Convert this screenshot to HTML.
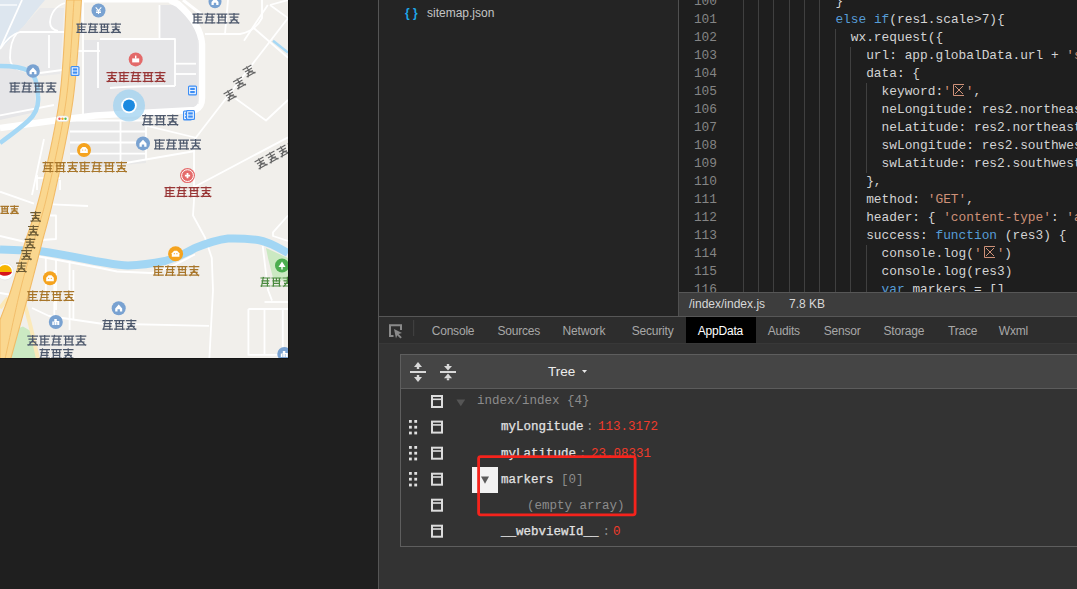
<!DOCTYPE html>
<html><head><meta charset="utf-8">
<style>
*{margin:0;padding:0;box-sizing:border-box}
html,body{width:1077px;height:589px;overflow:hidden;background:#1f1f1f;font-family:"Liberation Sans",sans-serif}
.a{position:absolute}
#map{left:0;top:0;width:289px;height:359px;background:#f1efeb;border-right:1px solid #141414;border-bottom:1px solid #141414;overflow:hidden}
#vline{left:378px;top:0;width:1px;height:589px;background:#555;z-index:2}
#tree{left:379px;top:0;width:299px;height:316px;background:#242424}
#tline{left:678px;top:0;width:1px;height:316px;background:#505050;z-index:2}
#editor{left:679px;top:0;width:398px;height:292px;background:#1e1e1e;overflow:hidden;font-family:"Liberation Mono",monospace;font-size:12.83px;color:#d4d4d4}
.ln{position:absolute;left:0;width:38px;text-align:right;color:#858585;height:18px;line-height:18px}
.cl{position:absolute;left:49px;white-space:pre;height:18px;line-height:18px}
.g{position:absolute;width:1px;background:#404040}
.k{color:#569cd6}.s{color:#ce9178}
.box{display:inline-block;width:13px;height:12px;vertical-align:-1px;position:relative;margin:0 1px 0 1px}
#status{left:679px;top:292px;width:398px;height:24px;background:#3d3d3d;border-top:1px solid #575757;color:#d8d8d8;font-size:12px}
#hline{left:379px;top:316px;width:698px;height:1px;background:#575757}
#tabs{left:379px;top:317px;width:698px;height:27px;background:#2d2d2d;border-bottom:1px solid #383838;font-size:12px;letter-spacing:-0.2px;color:#a8a8a8}
.tab{position:absolute;top:0;height:26px;line-height:28px;white-space:nowrap}
#panel{left:379px;top:344px;width:698px;height:245px;background:#333333}
#adbox{left:400px;top:354px;width:690px;height:193px;border:1px solid #5e5e5e;background:#333}
#adhead{left:401px;top:355px;width:690px;height:34px;background:#454545;border-bottom:1px solid #5c5c5c}
.mono{font-family:"Liberation Mono",monospace;font-size:12.5px;white-space:pre}
.key{color:#e2e2e2;font-weight:normal;-webkit-text-stroke:0.25px #e2e2e2}
.col{color:#8a8a8a;margin-left:2.5px}
.num{color:#ef3b2b;margin-left:4.5px}
</style></head><body>
<div id="map" class="a">
<svg class="a" style="left:0;top:0" width="288" height="358" viewBox="0 0 288 358">
<rect width="289" height="359" fill="#f1efeb"/>
<path d="M0,0 H45 C38,8 30,18 24,26 C16,36 8,42 0,50 Z" fill="#dde6ef"/>
<path d="M22,0 L0,49" stroke="#fff" stroke-width="1.8" fill="none"/>
<path d="M0,5 H17" stroke="#fff" stroke-width="1.2" fill="none"/>
<path d="M84,40 H159 V5 H176 C186,12 194,22 198,34 L201,44 V100 L200,112 C170,114 120,116 84,118 Z" fill="#e5e5e7"/>
<path d="M70,121 H146 L146,163 L70,170 Z" fill="#e8e8e8"/>
<path d="M0,50 C8,42 16,32 24,26 L40,8 H64 L60,74 L40,76 C30,70 18,66 0,64 Z" fill="#e9e9ea"/>
<path d="M0,66 C18,68 30,74 34,80 L36,112 L0,120 Z" fill="#e6e6e8"/>
<path d="M0,49 C6,40 12,34 20,32 H64" stroke="#fff" stroke-width="1.8" fill="none" stroke-linejoin="round"/>
<path d="M17,33 C11,40 10,48 10,58 C10,64 14,68 20,70" stroke="#fff" stroke-width="1.8" fill="none" stroke-linejoin="round"/>
<path d="M49,35 V68" stroke="#fff" stroke-width="1.8" fill="none" stroke-linejoin="round"/>
<path d="M65,3 C56,6 51,12 50,22 C50,28 53,30 58,31" stroke="#fff" stroke-width="1.8" fill="none" stroke-linejoin="round"/>
<path d="M40,73 L62,70" stroke="#fff" stroke-width="1.8" fill="none" stroke-linejoin="round"/>
<path d="M83,0 V120" stroke="#fff" stroke-width="1.8" fill="none" stroke-linejoin="round"/>
<path d="M75,51 H100" stroke="#fff" stroke-width="1.8" fill="none" stroke-linejoin="round"/>
<path d="M98,42 V88" stroke="#fff" stroke-width="1.8" fill="none" stroke-linejoin="round"/>
<path d="M100,39 H175 V86" stroke="#fff" stroke-width="1.8" fill="none" stroke-linejoin="round"/>
<path d="M159.5,5 V39" stroke="#fff" stroke-width="1.8" fill="none" stroke-linejoin="round"/>
<path d="M175,63.7 H196" stroke="#fff" stroke-width="1.8" fill="none" stroke-linejoin="round"/>
<path d="M175,74 H196" stroke="#fff" stroke-width="1.8" fill="none" stroke-linejoin="round"/>
<path d="M110,88 C130,86 150,86 175,86" stroke="#fff" stroke-width="1.8" fill="none" stroke-linejoin="round"/>
<path d="M205,34 H240 C250,32 258,26 262,18 V0" stroke="#fff" stroke-width="1.8" fill="none" stroke-linejoin="round"/>
<path d="M228,0 L225,34" stroke="#fff" stroke-width="1.8" fill="none" stroke-linejoin="round"/>
<path d="M270,5 L288,18" stroke="#fff" stroke-width="1.8" fill="none" stroke-linejoin="round"/>
<path d="M252.5,27 L288,57.7" stroke="#fff" stroke-width="1.8" fill="none" stroke-linejoin="round"/>
<path d="M267.8,5 L244,40.7" stroke="#fff" stroke-width="1.8" fill="none" stroke-linejoin="round"/>
<path d="M288,0 L270,5" stroke="#fff" stroke-width="1.8" fill="none" stroke-linejoin="round"/>
<path d="M288,18 L194.8,139" stroke="#fff" stroke-width="1.8" fill="none" stroke-linejoin="round"/>
<path d="M235.5,98.4 L266,120.5 L288,100" stroke="#fff" stroke-width="1.8" fill="none" stroke-linejoin="round"/>
<path d="M194.8,186.7 L288,137.4" stroke="#fff" stroke-width="1.8" fill="none" stroke-linejoin="round"/>
<path d="M0,115.4 L54,105" stroke="#fff" stroke-width="1.8" fill="none" stroke-linejoin="round"/>
<path d="M44,139 L32,195" stroke="#fff" stroke-width="1.8" fill="none" stroke-linejoin="round"/>
<path d="M70,120.5 H146" stroke="#fff" stroke-width="1.8" fill="none" stroke-linejoin="round"/>
<path d="M70,131.5 H146" stroke="#fff" stroke-width="1.8" fill="none" stroke-linejoin="round"/>
<path d="M70,142.5 H146" stroke="#fff" stroke-width="1.8" fill="none" stroke-linejoin="round"/>
<path d="M70,153.6 H146" stroke="#fff" stroke-width="1.8" fill="none" stroke-linejoin="round"/>
<path d="M120.5,120 V165" stroke="#fff" stroke-width="1.8" fill="none" stroke-linejoin="round"/>
<path d="M146,118 V160" stroke="#fff" stroke-width="1.8" fill="none" stroke-linejoin="round"/>
<path d="M125.6,163 L195,151" stroke="#fff" stroke-width="1.8" fill="none" stroke-linejoin="round"/>
<path d="M146,125.6 L195,137.5" stroke="#fff" stroke-width="1.8" fill="none" stroke-linejoin="round"/>
<path d="M194,139 V200 L193,215.5 L205,237.5 L211.8,258 L213,290 L209.4,358" stroke="#fff" stroke-width="1.8" fill="none" stroke-linejoin="round"/>
<path d="M0,191.7 L34,203.6" stroke="#fff" stroke-width="1.8" fill="none" stroke-linejoin="round"/>
<path d="M52.6,204.4 L88,206" stroke="#fff" stroke-width="1.8" fill="none" stroke-linejoin="round"/>
<path d="M40.7,215.5 H56 V239 L40.7,240" stroke="#fff" stroke-width="1.8" fill="none" stroke-linejoin="round"/>
<path d="M0,236 L34,244" stroke="#fff" stroke-width="1.8" fill="none" stroke-linejoin="round"/>
<path d="M45.8,258 V300" stroke="#fff" stroke-width="1.8" fill="none" stroke-linejoin="round"/>
<path d="M56,259 V310" stroke="#fff" stroke-width="1.8" fill="none" stroke-linejoin="round"/>
<path d="M69.6,261 V330" stroke="#fff" stroke-width="1.8" fill="none" stroke-linejoin="round"/>
<path d="M54.3,270 V316" stroke="#fff" stroke-width="1.8" fill="none" stroke-linejoin="round"/>
<path d="M73.4,270 V320" stroke="#fff" stroke-width="1.8" fill="none" stroke-linejoin="round"/>
<path d="M32,308 L49,316 L100,323.5 L209,325.8" stroke="#fff" stroke-width="1.8" fill="none" stroke-linejoin="round"/>
<path d="M0,293 L9,294.5" stroke="#fff" stroke-width="1.8" fill="none" stroke-linejoin="round"/>
<path d="M262.7,246 L268,290 L272,300.6" stroke="#fff" stroke-width="1.8" fill="none" stroke-linejoin="round"/>
<path d="M264.5,302 H288" stroke="#fff" stroke-width="1.8" fill="none" stroke-linejoin="round"/>
<path d="M248.4,309 H288 M248.4,309 V354.9 H288 M264.5,309 V354.9 M282.8,309 V354.9" stroke="#fff" stroke-width="1.8" fill="none" stroke-linejoin="round"/>
<path d="M288,215.5 L273,232.4 V236 L288,241" stroke="#fff" stroke-width="1.8" fill="none" stroke-linejoin="round"/>
<path d="M37,175 V190" stroke="#fff" stroke-width="1.8" fill="none" stroke-linejoin="round"/>
<path d="M60,180 V190" stroke="#fff" stroke-width="1.8" fill="none" stroke-linejoin="round"/>
<path d="M35,178 H60" stroke="#fff" stroke-width="1.8" fill="none" stroke-linejoin="round"/>
<path d="M0,128 L58,120 L95,115.5 L140,113 L195,110 C200,108 202,104 202,98 V44 C201,30 194,18 178,4 L170,0" stroke="#fff" stroke-width="6.5" fill="none" stroke-linejoin="round"/>
<path d="M183,0 L201,14" stroke="#fff" stroke-width="3" fill="none"/>
<path d="M198,40 V104" stroke="#e9e9ea" stroke-width="1" fill="none"/>
<path d="M84,1 H176" stroke="#fff" stroke-width="3" fill="none"/>
<path d="M0,66 C12,66 22,67 29,71 C35,75 37,82 38,96 C39,106 36,114 28,121 C18,130 8,137 0,143" stroke="#a6d8f5" stroke-width="4.5" fill="none"/>
<path d="M273,40.7 L288,52.6" stroke="#a6d8f5" stroke-width="2.5" fill="none"/>
<path d="M0,249.5 C15,250 30,250.5 39,251 C60,254 80,258 95,261 C108,263 118,265.5 128,265.5 C145,265 155,263 165,261 C175,258 185,254 195,248 C205,244 215,240 228,238.5 C240,238 250,239 258,240 C266,241 276,246 288,253" stroke="#a2d6f4" stroke-width="8" fill="none"/>
<path d="M39,256.5 L100,268 L117,271.5 L151,273 C165,271 180,262 195,254.5" stroke="#fff" stroke-width="1.8" fill="none"/>
<path d="M266,248 L288,258 V282 L273,278 L268,258 Z" fill="#cbe9c2"/>
<path d="M10.7,331 L23,326.6 L30.6,331 L38,359 H11.5 Z" fill="#cbe9c2"/>
<path d="M23,299 C28,315 33,335 38,359" stroke="#fbe9b9" stroke-width="4" fill="none"/>
<path d="M0,308 L8,298" stroke="#fbe9b9" stroke-width="4" fill="none"/>
<path d="M66.5,0 C65.3,16.7 63.8,67.5 59.4,100 C55.0,132.5 45.6,171.5 40,195 C34.4,218.5 30.3,225.2 25.5,241 C20.7,256.8 15.2,276.8 11,290 C6.8,303.2 1.8,315.0 0,320 L0,359 L10.7,359 C13.9,347.5 24.4,309.7 29.7,290 C35.0,270.3 38.3,256.8 42.4,241 C46.5,225.2 49.2,218.5 54.3,195 C59.4,171.5 68.5,132.5 73,100 C77.5,67.5 80.1,16.7 81.5,0 Z" fill="#fad78f" stroke="#f2bb66" stroke-width="1.1" stroke-linejoin="round"/>
<path d="M74.0,0.0 C72.7,16.7 70.7,67.5 66.2,100.0 C61.7,132.5 52.5,171.5 47.15,195.0 C41.8,218.5 38.4,225.2 33.95,241.0 C29.5,256.8 25.2,270.3 20.35,290.0 C15.5,309.7 7.6,347.5 5,359" stroke="#f2bb66" stroke-width="0.9" fill="none"/>
<rect x="56.5" y="116" width="12" height="5.5" rx="2.7" fill="#fff" stroke="#ddd" stroke-width="0.6"/>
<circle cx="59.5" cy="118.8" r="1.2" fill="#e55"/><circle cx="62.5" cy="118.8" r="1.2" fill="#f5a623"/><circle cx="65.5" cy="118.8" r="1.2" fill="#5b5"/>
<circle cx="98.5" cy="10.5" r="7" fill="#79a2d1"/>
<path d="M95.7,7.3 L98.5,10.5 L101.3,7.3 M98.5,10.5 V14.0 M96.0,11.0 H101.0 M96.0,12.5 H101.0" stroke="#fff" stroke-width="1.1" fill="none"/>
<circle cx="33" cy="71" r="6.8" fill="#79a2d1"/>
<path d="M29.5,71.2 L33,67.4 L36.5,71.2 V74.3 H34.2 V72 H31.8 V74.3 H29.5 Z" fill="#fff"/>
<circle cx="215" cy="1.7" r="6.5" fill="#79a2d1"/>
<path d="M211.5,1.9 L215,-1.9000000000000001 L218.5,1.9 V5.0 H216.2 V2.7 H213.8 V5.0 H211.5 Z" fill="#fff"/>
<circle cx="135.7" cy="59.4" r="7" fill="#e36a6a"/>
<rect x="132.2" y="58.4" width="7" height="4" fill="#fff"/><rect x="135.0" y="55.6" width="1.4" height="3" fill="#fff"/>
<circle cx="143" cy="143.4" r="7" fill="#79a2d1"/>
<path d="M139.5,143.6 L143,139.8 L146.5,143.6 V146.70000000000002 H144.2 V144.4 H141.8 V146.70000000000002 H139.5 Z" fill="#fff"/>
<circle cx="187.5" cy="175.6" r="7.5" fill="#e56b6b"/>
<circle cx="187.5" cy="175.6" r="5.9" fill="none" stroke="#fff" stroke-width="1"/>
<path d="M184.9,175.6 H190.1 M187.5,173.0 V178.2" stroke="#fff" stroke-width="1.8"/>
<circle cx="84" cy="150" r="7" fill="#f5a31e"/>
<path d="M80.2,153 V149.5 L82.5,147 H85.5 L87.8,149.5 V153 Z" fill="#fff"/>
<circle cx="82.7" cy="150" r="0.6" fill="#f5a31e"/><circle cx="85.3" cy="150" r="0.6" fill="#f5a31e"/>
<circle cx="50" cy="278.3" r="7" fill="#f5a31e"/>
<path d="M46.2,281.3 V277.8 L48.5,275.3 H51.5 L53.8,277.8 V281.3 Z" fill="#fff"/>
<circle cx="48.7" cy="278.3" r="0.6" fill="#f5a31e"/><circle cx="51.3" cy="278.3" r="0.6" fill="#f5a31e"/>
<circle cx="175.6" cy="253.7" r="7.5" fill="#f5a31e"/>
<path d="M171.79999999999998,256.7 V253.2 L174.1,250.7 H177.1 L179.4,253.2 V256.7 Z" fill="#fff"/>
<circle cx="174.29999999999998" cy="253.7" r="0.6" fill="#f5a31e"/><circle cx="176.9" cy="253.7" r="0.6" fill="#f5a31e"/>
<circle cx="282" cy="265.5" r="7" fill="#4cae50"/>
<path d="M282,261.5 L285.5,267.0 H278.5 Z M281.3,266.5 h1.4 v3 h-1.4 Z" fill="#fff"/>
<circle cx="118.7" cy="308.2" r="7" fill="#79a2d1"/>
<path d="M115.2,308.4 L118.7,304.59999999999997 L122.2,308.4 V311.5 H119.9 V309.2 H117.5 V311.5 H115.2 Z" fill="#fff"/>
<circle cx="55.8" cy="322" r="7" fill="#79a2d1"/>
<path d="M52.3,325 V321.5 H54.3 V319 H56.8 V321 H59.3 V325 Z" fill="#fff"/>
<path d="M54.3,325 V322 M56.8,325 V322" stroke="#79a2d1" stroke-width="0.6"/>
<circle cx="284.3" cy="354" r="7" fill="#79a2d1"/>
<path d="M280.8,357 V353.5 H282.8 V351 H285.3 V353 H287.8 V357 Z" fill="#fff"/>
<path d="M282.8,357 V354 M285.3,357 V354" stroke="#79a2d1" stroke-width="0.6"/>
<rect x="70.5" y="66" width="9" height="10" rx="1.5" fill="#3d8ef5"/>
<rect x="72.2" y="67.8" width="5.6" height="6.4" fill="none" stroke="#fff" stroke-width="1"/>
<path d="M72.2,71 H77.8" stroke="#fff" stroke-width="0.9"/>
<rect x="188.0" y="85.5" width="9" height="10" rx="1.5" fill="#3d8ef5"/>
<rect x="189.7" y="87.3" width="5.6" height="6.4" fill="none" stroke="#fff" stroke-width="1"/>
<path d="M189.7,90.5 H195.3" stroke="#fff" stroke-width="0.9"/>
<rect x="183.0" y="110.4" width="9" height="10" rx="1.5" fill="#3d8ef5"/>
<rect x="184.7" y="112.2" width="5.6" height="6.4" fill="none" stroke="#fff" stroke-width="1"/>
<path d="M184.7,115.4 H190.3" stroke="#fff" stroke-width="0.9"/>
<rect x="186.0" y="110" width="9" height="10" rx="1.5" fill="#3d8ef5"/>
<rect x="187.7" y="111.8" width="5.6" height="6.4" fill="none" stroke="#fff" stroke-width="1"/>
<path d="M187.7,115 H193.3" stroke="#fff" stroke-width="0.9"/>
<circle cx="5" cy="271.5" r="8.5" fill="#fff" stroke="#e3e3e3" stroke-width="0.8"/>
<path d="M-2,272 A7,7 0 0 1 12,272 Z" fill="#f7b500"/><path d="M-2,272 H12 C10,277 0,277 -2,272 Z" fill="#d7141a"/>
<circle cx="129" cy="105.5" r="16" fill="#9fd2f0" fill-opacity="0.75"/>
<circle cx="129" cy="105.5" r="7.8" fill="#fff"/>
<circle cx="129" cy="105.5" r="6" fill="#1b8ae0"/>
<path d="M76.4,24.1 H86.8 M77.5,27.0 H85.7 M78.0,29.6 H85.2 M76.4,32.3 H86.8 M81.6,22.8 V33.1 M78.0,24.4 V32.3 M87.9,24.1 H98.2 M88.9,27.0 H97.1 M89.4,29.6 H96.6 M87.9,32.3 H98.2 M91.0,22.8 L88.9,33.1 M95.1,24.4 V33.1 M99.3,24.1 H109.6 M100.3,27.0 H108.6 M100.8,29.6 H108.1 M99.3,32.3 H109.6 M101.4,24.4 V33.1 M107.5,24.4 V33.1 M104.4,24.4 V28.0 M110.7,24.1 H121.0 M111.8,27.0 H120.0 M112.3,29.6 H119.5 M110.7,32.3 H121.0 M115.9,22.8 V28.0 L111.8,33.1 M115.9,28.0 L120.5,33.1" stroke="#4d586c" stroke-width="1.2" fill="none"/>
<path d="M192.5,14.2 H203.3 M193.6,17.2 H202.2 M194.1,20.0 H201.7 M192.5,22.8 H203.3 M197.9,12.9 V23.7 M194.1,14.5 V22.8 M204.5,14.2 H215.4 M205.6,17.2 H214.3 M206.1,20.0 H213.7 M204.5,22.8 H215.4 M207.8,12.9 L205.6,23.7 M212.1,14.5 V23.7 M216.5,14.2 H227.4 M217.6,17.2 H226.3 M218.2,20.0 H225.8 M216.5,22.8 H227.4 M218.7,14.5 V23.7 M225.2,14.5 V23.7 M222.0,14.5 V18.3 M228.6,14.2 H239.4 M229.7,17.2 H238.4 M230.2,20.0 H237.8 M228.6,22.8 H239.4 M234.0,12.9 V18.3 L229.7,23.7 M234.0,18.3 L238.9,23.7" stroke="#4d586c" stroke-width="1.2" fill="none"/>
<path d="M106.5,72.7 H117.3 M107.6,75.7 H116.2 M108.1,78.5 H115.7 M106.5,81.3 H117.3 M111.9,71.4 V76.8 L107.6,82.2 M111.9,76.8 L116.8,82.2 M118.5,72.7 H129.4 M119.6,75.7 H128.3 M120.1,78.5 H127.7 M118.5,81.3 H129.4 M123.9,71.4 V82.2 M120.1,73.0 V81.3 M130.5,72.7 H141.4 M131.6,75.7 H140.3 M132.2,78.5 H139.8 M130.5,81.3 H141.4 M133.8,71.4 L131.6,82.2 M138.1,73.0 V82.2 M142.6,72.7 H153.4 M143.7,75.7 H152.4 M144.2,78.5 H151.8 M142.6,81.3 H153.4 M144.8,73.0 V82.2 M151.3,73.0 V82.2 M148.0,73.0 V76.8 M154.6,72.7 H165.5 M155.7,75.7 H164.4 M156.2,78.5 H163.8 M154.6,81.3 H165.5 M160.0,71.4 V76.8 L155.7,82.2 M160.0,76.8 L164.9,82.2" stroke="#983535" stroke-width="1.2" fill="none"/>
<path d="M9.5,83.2 H20.3 M10.6,86.2 H19.2 M11.1,89.0 H18.7 M9.5,91.8 H20.3 M14.9,81.9 V92.7 M11.1,83.5 V91.8 M21.5,83.2 H32.4 M22.6,86.2 H31.3 M23.1,89.0 H30.7 M21.5,91.8 H32.4 M24.8,81.9 L22.6,92.7 M29.1,83.5 V92.7 M33.5,83.2 H44.4 M34.6,86.2 H43.3 M35.2,89.0 H42.8 M33.5,91.8 H44.4 M35.7,83.5 V92.7 M42.2,83.5 V92.7 M39.0,83.5 V87.3 M45.6,83.2 H56.4 M46.7,86.2 H55.4 M47.2,89.0 H54.8 M45.6,91.8 H56.4 M51.0,81.9 V87.3 L46.7,92.7 M51.0,87.3 L55.9,92.7" stroke="#4d586c" stroke-width="1.2" fill="none"/>
<path d="M142.2,115.7 H153.4 M143.3,118.9 H152.3 M143.9,121.8 H151.7 M142.2,124.7 H153.4 M145.6,114.4 L143.3,125.6 M150.0,116.0 V125.6 M154.6,115.7 H165.9 M155.8,118.9 H164.7 M156.3,121.8 H164.2 M154.6,124.7 H165.9 M156.9,116.0 V125.6 M163.6,116.0 V125.6 M160.2,116.0 V120.0 M167.1,115.7 H178.3 M168.2,118.9 H177.2 M168.8,121.8 H176.6 M167.1,124.7 H178.3 M172.7,114.4 V120.0 L168.2,125.6 M172.7,120.0 L177.7,125.6" stroke="#4d586c" stroke-width="1.2" fill="none"/>
<path d="M154.1,140.2 H164.9 M155.2,143.2 H163.8 M155.7,146.0 H163.3 M154.1,148.8 H164.9 M159.5,138.9 V149.7 M155.7,140.5 V148.8 M166.1,140.2 H177.0 M167.2,143.2 H175.9 M167.7,146.0 H175.3 M166.1,148.8 H177.0 M169.4,138.9 L167.2,149.7 M173.7,140.5 V149.7 M178.1,140.2 H189.0 M179.2,143.2 H187.9 M179.8,146.0 H187.4 M178.1,148.8 H189.0 M180.3,140.5 V149.7 M186.8,140.5 V149.7 M183.6,140.5 V144.3 M190.2,140.2 H201.0 M191.3,143.2 H200.0 M191.8,146.0 H199.4 M190.2,148.8 H201.0 M195.6,138.9 V144.3 L191.3,149.7 M195.6,144.3 L200.5,149.7" stroke="#4d586c" stroke-width="1.2" fill="none"/>
<path d="M42.5,162.7 H53.5 M43.6,165.8 H52.4 M44.1,168.6 H51.9 M42.5,171.5 H53.5 M45.8,161.4 L43.6,172.4 M50.2,163.0 V172.4 M54.7,162.7 H65.8 M55.8,165.8 H64.7 M56.4,168.6 H64.1 M54.7,171.5 H65.8 M56.9,163.0 V172.4 M63.6,163.0 V172.4 M60.2,163.0 V166.9 M67.0,162.7 H78.0 M68.1,165.8 H76.9 M68.6,168.6 H76.3 M67.0,171.5 H78.0 M72.5,161.4 V166.9 L68.1,172.4 M72.5,166.9 L77.4,172.4 M79.2,162.7 H90.2 M80.3,165.8 H89.1 M80.9,168.6 H88.6 M79.2,171.5 H90.2 M84.7,161.4 V172.4 M80.9,163.0 V171.5 M91.4,162.7 H102.5 M92.5,165.8 H101.4 M93.1,168.6 H100.8 M91.4,171.5 H102.5 M94.8,161.4 L92.5,172.4 M99.2,163.0 V172.4 M103.7,162.7 H114.7 M104.8,165.8 H113.6 M105.3,168.6 H113.1 M103.7,171.5 H114.7 M105.9,163.0 V172.4 M112.5,163.0 V172.4 M109.2,163.0 V166.9 M115.9,162.7 H127.0 M117.0,165.8 H125.9 M117.6,168.6 H125.3 M115.9,171.5 H127.0 M121.4,161.4 V166.9 L117.0,172.4 M121.4,166.9 L126.4,172.4" stroke="#a8762a" stroke-width="1.2" fill="none"/>
<path d="M164.5,187.7 H175.3 M165.6,190.7 H174.2 M166.1,193.5 H173.7 M164.5,196.3 H175.3 M169.9,186.4 V197.2 M166.1,188.0 V196.3 M176.5,187.7 H187.4 M177.6,190.7 H186.3 M178.1,193.5 H185.7 M176.5,196.3 H187.4 M179.8,186.4 L177.6,197.2 M184.1,188.0 V197.2 M188.5,187.7 H199.4 M189.6,190.7 H198.3 M190.2,193.5 H197.8 M188.5,196.3 H199.4 M190.7,188.0 V197.2 M197.2,188.0 V197.2 M194.0,188.0 V191.8 M200.6,187.7 H211.4 M201.7,190.7 H210.4 M202.2,193.5 H209.8 M200.6,196.3 H211.4 M206.0,186.4 V191.8 L201.7,197.2 M206.0,191.8 L210.9,197.2" stroke="#983535" stroke-width="1.2" fill="none"/>
<path d="M0.4,206.3 H9.1 M1.3,208.8 H8.2 M1.7,211.1 H7.8 M0.4,213.3 H9.1 M2.1,206.6 V214.0 M7.4,206.6 V214.0 M4.8,206.6 V209.7 M10.1,206.3 H18.8 M10.9,208.8 H17.9 M11.4,211.1 H17.5 M10.1,213.3 H18.8 M14.4,205.3 V209.7 L10.9,214.0 M14.4,209.7 L18.4,214.0" stroke="#a8762a" stroke-width="1.2" fill="none"/>
<path d="M153.2,266.6 H163.8 M154.2,269.6 H162.8 M154.8,272.4 H162.2 M153.2,275.2 H163.8 M158.5,265.3 V276.0 M154.8,266.9 V275.2 M165.0,266.6 H175.7 M166.1,269.6 H174.6 M166.6,272.4 H174.1 M165.0,275.2 H175.7 M168.2,265.3 L166.1,276.0 M172.5,266.9 V276.0 M176.8,266.6 H187.5 M177.9,269.6 H186.4 M178.4,272.4 H185.9 M176.8,275.2 H187.5 M179.0,266.9 V276.0 M185.4,266.9 V276.0 M182.2,266.9 V270.7 M188.7,266.6 H199.3 M189.7,269.6 H198.3 M190.3,272.4 H197.7 M188.7,275.2 H199.3 M194.0,265.3 V270.7 L189.7,276.0 M194.0,270.7 L198.8,276.0" stroke="#a8762a" stroke-width="1.2" fill="none"/>
<path d="M27.3,291.7 H38.1 M28.4,294.7 H37.0 M28.9,297.5 H36.5 M27.3,300.3 H38.1 M32.7,290.4 V301.2 M28.9,292.0 V300.3 M39.3,291.7 H50.2 M40.4,294.7 H49.1 M40.9,297.5 H48.5 M39.3,300.3 H50.2 M42.6,290.4 L40.4,301.2 M46.9,292.0 V301.2 M51.3,291.7 H62.2 M52.4,294.7 H61.1 M53.0,297.5 H60.6 M51.3,300.3 H62.2 M53.5,292.0 V301.2 M60.0,292.0 V301.2 M56.8,292.0 V295.8 M63.4,291.7 H74.2 M64.5,294.7 H73.2 M65.0,297.5 H72.6 M63.4,300.3 H74.2 M68.8,290.4 V295.8 L64.5,301.2 M68.8,295.8 L73.7,301.2" stroke="#a8762a" stroke-width="1.2" fill="none"/>
<path d="M102.4,320.6 H112.9 M103.4,323.6 H111.9 M103.9,326.3 H111.4 M102.4,329.1 H112.9 M105.5,319.3 L103.4,329.9 M109.8,320.9 V329.9 M114.1,320.6 H124.7 M115.1,323.6 H123.6 M115.7,326.3 H123.1 M114.1,329.1 H124.7 M116.2,320.9 V329.9 M122.6,320.9 V329.9 M119.4,320.9 V324.6 M125.8,320.6 H136.4 M126.9,323.6 H135.3 M127.4,326.3 H134.8 M125.8,329.1 H136.4 M131.1,319.3 V324.6 L126.9,329.9 M131.1,324.6 L135.9,329.9" stroke="#4d586c" stroke-width="1.2" fill="none"/>
<path d="M27.3,336.2 H38.1 M28.4,339.2 H37.0 M28.9,342.0 H36.5 M27.3,344.8 H38.1 M32.7,334.9 V340.3 L28.4,345.7 M32.7,340.3 L37.6,345.7 M39.3,336.2 H50.2 M40.4,339.2 H49.1 M40.9,342.0 H48.5 M39.3,344.8 H50.2 M44.7,334.9 V345.7 M40.9,336.5 V344.8 M51.3,336.2 H62.2 M52.4,339.2 H61.1 M53.0,342.0 H60.6 M51.3,344.8 H62.2 M54.6,334.9 L52.4,345.7 M58.9,336.5 V345.7 M63.4,336.2 H74.2 M64.5,339.2 H73.2 M65.0,342.0 H72.6 M63.4,344.8 H74.2 M65.6,336.5 V345.7 M72.1,336.5 V345.7 M68.8,336.5 V340.3 M75.4,336.2 H86.3 M76.5,339.2 H85.2 M77.0,342.0 H84.6 M75.4,344.8 H86.3 M80.8,334.9 V340.3 L76.5,345.7 M80.8,340.3 L85.7,345.7" stroke="#4d586c" stroke-width="1.2" fill="none"/>
<path d="M39.5,349.6 H50.0 M40.5,352.6 H49.0 M41.0,355.3 H48.5 M39.5,358.1 H50.0 M42.6,348.3 L40.5,358.9 M46.9,349.9 V358.9 M51.2,349.6 H61.8 M52.2,352.6 H60.7 M52.8,355.3 H60.2 M51.2,358.1 H61.8 M53.3,349.9 V358.9 M59.7,349.9 V358.9 M56.5,349.9 V353.6 M62.9,349.6 H73.5 M64.0,352.6 H72.4 M64.5,355.3 H71.9 M62.9,358.1 H73.5 M68.2,348.3 V353.6 L64.0,358.9 M68.2,353.6 L73.0,358.9" stroke="#4d586c" stroke-width="1.2" fill="none"/>
<path d="M260.4,278.0 H270.4 M261.4,280.8 H269.4 M261.9,283.4 H268.9 M260.4,286.0 H270.4 M263.4,276.8 L261.4,286.8 M267.4,278.3 V286.8 M271.4,278.0 H281.4 M272.4,280.8 H280.4 M272.9,283.4 H279.9 M271.4,286.0 H281.4 M273.4,278.3 V286.8 M279.4,278.3 V286.8 M276.4,278.3 V281.8 M282.5,278.0 H292.4 M283.5,280.8 H291.4 M284.0,283.4 H290.9 M282.5,286.0 H292.4 M287.4,276.8 V281.8 L283.5,286.8 M287.4,281.8 L291.9,286.8" stroke="#4a8a3e" stroke-width="1.2" fill="none"/>
<g transform="rotate(-30 249 71)"><path d="M243.9,67.0 H254.1 M245.0,69.9 H253.0 M245.5,72.5 H252.5 M243.9,75.1 H254.1 M249.0,65.8 V70.9 L245.0,76.0 M249.0,70.9 L253.6,76.0" stroke="#666" stroke-width="1.2" fill="none"/></g>
<g transform="rotate(-30 239.5 83)"><path d="M234.4,79.0 H244.6 M235.5,81.9 H243.5 M236.0,84.5 H243.0 M234.4,87.1 H244.6 M239.5,77.8 V82.9 L235.5,88.0 M239.5,82.9 L244.1,88.0" stroke="#666" stroke-width="1.2" fill="none"/></g>
<g transform="rotate(-30 230 95)"><path d="M224.9,91.0 H235.1 M226.0,93.9 H234.0 M226.5,96.5 H233.5 M224.9,99.1 H235.1 M230.0,89.8 V94.9 L226.0,100.0 M230.0,94.9 L234.6,100.0" stroke="#666" stroke-width="1.2" fill="none"/></g>
<g transform="rotate(-30 261 163)"><path d="M255.9,159.0 H266.1 M257.0,161.9 H265.0 M257.5,164.5 H264.5 M255.9,167.1 H266.1 M261.0,157.8 V162.9 L257.0,168.0 M261.0,162.9 L265.6,168.0" stroke="#666" stroke-width="1.2" fill="none"/></g>
<g transform="rotate(-30 272 157)"><path d="M266.9,153.0 H277.1 M268.0,155.9 H276.0 M268.5,158.5 H275.5 M266.9,161.1 H277.1 M272.0,151.8 V156.9 L268.0,162.0 M272.0,156.9 L276.6,162.0" stroke="#666" stroke-width="1.2" fill="none"/></g>
<g transform="rotate(-30 283 151)"><path d="M277.9,147.0 H288.1 M279.0,149.9 H287.0 M279.5,152.5 H286.5 M277.9,155.1 H288.1 M283.0,145.8 V150.9 L279.0,156.0 M283.0,150.9 L287.6,156.0" stroke="#666" stroke-width="1.2" fill="none"/></g>
<g transform="rotate(-30 294 145)"><path d="M288.9,141.0 H299.1 M290.0,143.9 H298.0 M290.5,146.5 H297.5 M288.9,149.1 H299.1 M294.0,139.8 V144.9 L290.0,150.0 M294.0,144.9 L298.6,150.0" stroke="#666" stroke-width="1.2" fill="none"/></g>
<g transform="rotate(0 35.6 216.7)"><path d="M30.3,212.6 H40.9 M31.4,215.5 H39.8 M31.9,218.3 H39.3 M30.3,221.0 H40.9 M35.6,211.3 V216.6 L31.4,221.9 M35.6,216.6 L40.4,221.9" stroke="#6b5a34" stroke-width="1.2" fill="none"/></g>
<g transform="rotate(0 33.3 230.6)"><path d="M28.0,226.5 H38.6 M29.1,229.4 H37.5 M29.6,232.2 H37.0 M28.0,234.9 H38.6 M33.3,225.2 V230.5 L29.1,235.8 M33.3,230.5 L38.1,235.8" stroke="#6b5a34" stroke-width="1.2" fill="none"/></g>
<g transform="rotate(0 30 243.4)"><path d="M24.7,239.3 H35.3 M25.8,242.2 H34.2 M26.3,245.0 H33.7 M24.7,247.7 H35.3 M30.0,238.0 V243.3 L25.8,248.6 M30.0,243.3 L34.8,248.6" stroke="#6b5a34" stroke-width="1.2" fill="none"/></g>
<g transform="rotate(0 26.5 254.8)"><path d="M21.2,250.7 H31.8 M22.3,253.6 H30.7 M22.8,256.4 H30.2 M21.2,259.1 H31.8 M26.5,249.4 V254.7 L22.3,260.0 M26.5,254.7 L31.3,260.0" stroke="#6b5a34" stroke-width="1.2" fill="none"/></g>
<g transform="rotate(0 21.4 267.2)"><path d="M16.1,263.1 H26.7 M17.2,266.0 H25.6 M17.7,268.8 H25.1 M16.1,271.5 H26.7 M21.4,261.8 V267.1 L17.2,272.4 M21.4,267.1 L26.2,272.4" stroke="#6b5a34" stroke-width="1.2" fill="none"/></g>
</svg>
</div>
<div id="vline" class="a"></div>
<div id="tree" class="a">
  <div class="a" style="left:26px;top:6px;color:#1ea7e8;font-weight:bold;font-size:12px;white-space:pre">{ }</div>
  <div class="a" style="left:48px;top:6px;color:#c4c4c4;font-size:12px">sitemap.json</div>
</div>
<div id="tline" class="a"></div>
<div id="editor" class="a">
<div class="ln" style="top:-7px">100</div>
<div class="cl" style="top:-7px;left:64px">            }</div>
<div class="g" style="left:64px;top:-7px;height:18px"></div>
<div class="g" style="left:79px;top:-7px;height:18px"></div>
<div class="g" style="left:94px;top:-7px;height:18px"></div>
<div class="g" style="left:110px;top:-7px;height:18px"></div>
<div class="g" style="left:125px;top:-7px;height:18px"></div>
<div class="g" style="left:140px;top:-7px;height:18px"></div>
<div class="ln" style="top:11px">101</div>
<div class="cl" style="top:11px;left:64px">            <span class="k">else</span> <span class="k">if</span>(res1.scale&gt;7){</div>
<div class="g" style="left:64px;top:11px;height:18px"></div>
<div class="g" style="left:79px;top:11px;height:18px"></div>
<div class="g" style="left:94px;top:11px;height:18px"></div>
<div class="g" style="left:110px;top:11px;height:18px"></div>
<div class="g" style="left:125px;top:11px;height:18px"></div>
<div class="g" style="left:140px;top:11px;height:18px"></div>
<div class="ln" style="top:29px">102</div>
<div class="cl" style="top:29px;left:64px">              wx.request({</div>
<div class="g" style="left:64px;top:29px;height:18px"></div>
<div class="g" style="left:79px;top:29px;height:18px"></div>
<div class="g" style="left:94px;top:29px;height:18px"></div>
<div class="g" style="left:110px;top:29px;height:18px"></div>
<div class="g" style="left:125px;top:29px;height:18px"></div>
<div class="g" style="left:140px;top:29px;height:18px"></div>
<div class="g" style="left:156px;top:29px;height:18px"></div>
<div class="ln" style="top:47px">103</div>
<div class="cl" style="top:47px;left:64px">                url: app.globalData.url + <span class="s">&#x27;s</span></div>
<div class="g" style="left:64px;top:47px;height:18px"></div>
<div class="g" style="left:79px;top:47px;height:18px"></div>
<div class="g" style="left:94px;top:47px;height:18px"></div>
<div class="g" style="left:110px;top:47px;height:18px"></div>
<div class="g" style="left:125px;top:47px;height:18px"></div>
<div class="g" style="left:140px;top:47px;height:18px"></div>
<div class="g" style="left:156px;top:47px;height:18px"></div>
<div class="g" style="left:171px;top:47px;height:18px"></div>
<div class="ln" style="top:65px">104</div>
<div class="cl" style="top:65px;left:64px">                data: {</div>
<div class="g" style="left:64px;top:65px;height:18px"></div>
<div class="g" style="left:79px;top:65px;height:18px"></div>
<div class="g" style="left:94px;top:65px;height:18px"></div>
<div class="g" style="left:110px;top:65px;height:18px"></div>
<div class="g" style="left:125px;top:65px;height:18px"></div>
<div class="g" style="left:140px;top:65px;height:18px"></div>
<div class="g" style="left:156px;top:65px;height:18px"></div>
<div class="g" style="left:171px;top:65px;height:18px"></div>
<div class="ln" style="top:83px">105</div>
<div class="cl" style="top:83px;left:64px">                  keyword:<span class="s">&#x27;</span><svg class="box" width="13" height="12" viewBox="0 0 13 12"><path d="M1.5,0.5 H12 M1.5,0.5 V11.5 H12 M3,2 L11,10 M11,2 L3,10" stroke="#ce9178" stroke-width="1" fill="none"/></svg><span class="s">&#x27;</span>,</div>
<div class="g" style="left:64px;top:83px;height:18px"></div>
<div class="g" style="left:79px;top:83px;height:18px"></div>
<div class="g" style="left:94px;top:83px;height:18px"></div>
<div class="g" style="left:110px;top:83px;height:18px"></div>
<div class="g" style="left:125px;top:83px;height:18px"></div>
<div class="g" style="left:140px;top:83px;height:18px"></div>
<div class="g" style="left:156px;top:83px;height:18px"></div>
<div class="g" style="left:171px;top:83px;height:18px"></div>
<div class="g" style="left:187px;top:83px;height:18px"></div>
<div class="ln" style="top:101px">106</div>
<div class="cl" style="top:101px;left:64px">                  neLongitude: res2.northeast</div>
<div class="g" style="left:64px;top:101px;height:18px"></div>
<div class="g" style="left:79px;top:101px;height:18px"></div>
<div class="g" style="left:94px;top:101px;height:18px"></div>
<div class="g" style="left:110px;top:101px;height:18px"></div>
<div class="g" style="left:125px;top:101px;height:18px"></div>
<div class="g" style="left:140px;top:101px;height:18px"></div>
<div class="g" style="left:156px;top:101px;height:18px"></div>
<div class="g" style="left:171px;top:101px;height:18px"></div>
<div class="g" style="left:187px;top:101px;height:18px"></div>
<div class="ln" style="top:119px">107</div>
<div class="cl" style="top:119px;left:64px">                  neLatitude: res2.northeast</div>
<div class="g" style="left:64px;top:119px;height:18px"></div>
<div class="g" style="left:79px;top:119px;height:18px"></div>
<div class="g" style="left:94px;top:119px;height:18px"></div>
<div class="g" style="left:110px;top:119px;height:18px"></div>
<div class="g" style="left:125px;top:119px;height:18px"></div>
<div class="g" style="left:140px;top:119px;height:18px"></div>
<div class="g" style="left:156px;top:119px;height:18px"></div>
<div class="g" style="left:171px;top:119px;height:18px"></div>
<div class="g" style="left:187px;top:119px;height:18px"></div>
<div class="ln" style="top:137px">108</div>
<div class="cl" style="top:137px;left:64px">                  swLongitude: res2.southwest</div>
<div class="g" style="left:64px;top:137px;height:18px"></div>
<div class="g" style="left:79px;top:137px;height:18px"></div>
<div class="g" style="left:94px;top:137px;height:18px"></div>
<div class="g" style="left:110px;top:137px;height:18px"></div>
<div class="g" style="left:125px;top:137px;height:18px"></div>
<div class="g" style="left:140px;top:137px;height:18px"></div>
<div class="g" style="left:156px;top:137px;height:18px"></div>
<div class="g" style="left:171px;top:137px;height:18px"></div>
<div class="g" style="left:187px;top:137px;height:18px"></div>
<div class="ln" style="top:155px">109</div>
<div class="cl" style="top:155px;left:64px">                  swLatitude: res2.southwest</div>
<div class="g" style="left:64px;top:155px;height:18px"></div>
<div class="g" style="left:79px;top:155px;height:18px"></div>
<div class="g" style="left:94px;top:155px;height:18px"></div>
<div class="g" style="left:110px;top:155px;height:18px"></div>
<div class="g" style="left:125px;top:155px;height:18px"></div>
<div class="g" style="left:140px;top:155px;height:18px"></div>
<div class="g" style="left:156px;top:155px;height:18px"></div>
<div class="g" style="left:171px;top:155px;height:18px"></div>
<div class="g" style="left:187px;top:155px;height:18px"></div>
<div class="ln" style="top:173px">110</div>
<div class="cl" style="top:173px;left:64px">                },</div>
<div class="g" style="left:64px;top:173px;height:18px"></div>
<div class="g" style="left:79px;top:173px;height:18px"></div>
<div class="g" style="left:94px;top:173px;height:18px"></div>
<div class="g" style="left:110px;top:173px;height:18px"></div>
<div class="g" style="left:125px;top:173px;height:18px"></div>
<div class="g" style="left:140px;top:173px;height:18px"></div>
<div class="g" style="left:156px;top:173px;height:18px"></div>
<div class="g" style="left:171px;top:173px;height:18px"></div>
<div class="ln" style="top:191px">111</div>
<div class="cl" style="top:191px;left:64px">                method: <span class="s">&#x27;GET&#x27;</span>,</div>
<div class="g" style="left:64px;top:191px;height:18px"></div>
<div class="g" style="left:79px;top:191px;height:18px"></div>
<div class="g" style="left:94px;top:191px;height:18px"></div>
<div class="g" style="left:110px;top:191px;height:18px"></div>
<div class="g" style="left:125px;top:191px;height:18px"></div>
<div class="g" style="left:140px;top:191px;height:18px"></div>
<div class="g" style="left:156px;top:191px;height:18px"></div>
<div class="g" style="left:171px;top:191px;height:18px"></div>
<div class="ln" style="top:209px">112</div>
<div class="cl" style="top:209px;left:64px">                header: { <span class="s">&#x27;content-type&#x27;</span>: <span class="s">&#x27;a</span></div>
<div class="g" style="left:64px;top:209px;height:18px"></div>
<div class="g" style="left:79px;top:209px;height:18px"></div>
<div class="g" style="left:94px;top:209px;height:18px"></div>
<div class="g" style="left:110px;top:209px;height:18px"></div>
<div class="g" style="left:125px;top:209px;height:18px"></div>
<div class="g" style="left:140px;top:209px;height:18px"></div>
<div class="g" style="left:156px;top:209px;height:18px"></div>
<div class="g" style="left:171px;top:209px;height:18px"></div>
<div class="ln" style="top:227px">113</div>
<div class="cl" style="top:227px;left:64px">                success: <span class="k">function</span> (res3) {</div>
<div class="g" style="left:64px;top:227px;height:18px"></div>
<div class="g" style="left:79px;top:227px;height:18px"></div>
<div class="g" style="left:94px;top:227px;height:18px"></div>
<div class="g" style="left:110px;top:227px;height:18px"></div>
<div class="g" style="left:125px;top:227px;height:18px"></div>
<div class="g" style="left:140px;top:227px;height:18px"></div>
<div class="g" style="left:156px;top:227px;height:18px"></div>
<div class="g" style="left:171px;top:227px;height:18px"></div>
<div class="ln" style="top:245px">114</div>
<div class="cl" style="top:245px;left:64px">                  console.log(<span class="s">&#x27;</span><svg class="box" width="13" height="12" viewBox="0 0 13 12"><path d="M1.5,0.5 H12 M1.5,0.5 V11.5 H12 M3,2 L11,10 M11,2 L3,10" stroke="#ce9178" stroke-width="1" fill="none"/></svg><span class="s">&#x27;</span>)</div>
<div class="g" style="left:64px;top:245px;height:18px"></div>
<div class="g" style="left:79px;top:245px;height:18px"></div>
<div class="g" style="left:94px;top:245px;height:18px"></div>
<div class="g" style="left:110px;top:245px;height:18px"></div>
<div class="g" style="left:125px;top:245px;height:18px"></div>
<div class="g" style="left:140px;top:245px;height:18px"></div>
<div class="g" style="left:156px;top:245px;height:18px"></div>
<div class="g" style="left:171px;top:245px;height:18px"></div>
<div class="g" style="left:187px;top:245px;height:18px"></div>
<div class="ln" style="top:263px">115</div>
<div class="cl" style="top:263px;left:64px">                  console.log(res3)</div>
<div class="g" style="left:64px;top:263px;height:18px"></div>
<div class="g" style="left:79px;top:263px;height:18px"></div>
<div class="g" style="left:94px;top:263px;height:18px"></div>
<div class="g" style="left:110px;top:263px;height:18px"></div>
<div class="g" style="left:125px;top:263px;height:18px"></div>
<div class="g" style="left:140px;top:263px;height:18px"></div>
<div class="g" style="left:156px;top:263px;height:18px"></div>
<div class="g" style="left:171px;top:263px;height:18px"></div>
<div class="g" style="left:187px;top:263px;height:18px"></div>
<div class="ln" style="top:281px">116</div>
<div class="cl" style="top:281px;left:64px">                  <span class="k">var</span> markers = []</div>
<div class="g" style="left:64px;top:281px;height:18px"></div>
<div class="g" style="left:79px;top:281px;height:18px"></div>
<div class="g" style="left:94px;top:281px;height:18px"></div>
<div class="g" style="left:110px;top:281px;height:18px"></div>
<div class="g" style="left:125px;top:281px;height:18px"></div>
<div class="g" style="left:140px;top:281px;height:18px"></div>
<div class="g" style="left:156px;top:281px;height:18px"></div>
<div class="g" style="left:171px;top:281px;height:18px"></div>
<div class="g" style="left:187px;top:281px;height:18px"></div>
</div>
<div id="status" class="a">
  <div class="a" style="left:10px;top:4px">/index/index.js</div>
  <div class="a" style="left:110px;top:4px">7.8 KB</div>
</div>
<div id="hline" class="a"></div>
<div id="tabs" class="a">
<div class="tab" style="left:52.7px">Console</div>
<div class="tab" style="left:118.4px">Sources</div>
<div class="tab" style="left:183.6px">Network</div>
<div class="tab" style="left:252.7px">Security</div>
<div class="tab" style="left:307px;width:70px;background:#000"></div>
<div class="tab" style="left:318.7px;color:#fff">AppData</div>
<div class="tab" style="left:388.7px">Audits</div>
<div class="tab" style="left:444.8px">Sensor</div>
<div class="tab" style="left:504.5px">Storage</div>
<div class="tab" style="left:569.0px">Trace</div>
<div class="tab" style="left:619.8px">Wxml</div>
<svg class="a" style="left:0;top:0" width="40" height="26" viewBox="379 317 40 26">
 <path d="M393.5,336 H390 V325.2 H401 V330" fill="none" stroke="#8a8a8a" stroke-width="2"/>
 <polygon points="394,329 402,333 398.6,334 401.8,337.2 400.4,338.4 397.2,335.2 396,338.6" fill="#8a8a8a"/>
 <rect x="413" y="320" width="1.2" height="16" fill="#3f3f3f"/>
</svg>
</div>
<div id="panel" class="a"></div>
<div id="adbox" class="a"></div>
<div id="adhead" class="a"></div>
<svg class="a" style="left:400px;top:354px" width="677" height="192" viewBox="400 354 677 192">
 <g fill="#d8d8d8">
  <rect x="410" y="371" width="16" height="2"/>
  <polygon points="418,362 422,367 414,367"/><rect x="416.8" y="367" width="2.4" height="2"/>
  <polygon points="418,382 422,377 414,377"/><rect x="416.8" y="375" width="2.4" height="2"/>
  <rect x="440" y="371" width="16" height="2"/>
  <polygon points="448,370.5 452,366 444,366"/><rect x="446.8" y="364" width="2.4" height="2"/>
  <polygon points="448,373.5 452,378.3 444,378.3"/><rect x="446.8" y="378.3" width="2.4" height="2"/>
  <polygon points="582,370 587,370 584.5,373" fill="#e8e8e8"/>
 </g>
 <g fill="none" stroke="#dcdcdc" stroke-width="2">
  <rect x="432" y="396" width="10" height="11"/>
  <rect x="432" y="421.6" width="10" height="11"/>
  <rect x="432" y="447.7" width="10" height="11"/>
  <rect x="432" y="473.7" width="10" height="11"/>
  <rect x="432" y="499.7" width="10" height="11"/>
  <rect x="432" y="525.7" width="10" height="11"/>
 </g>
 <g fill="#dcdcdc">
  <rect x="433" y="398.5" width="8" height="1.6"/>
  <rect x="433" y="424.1" width="8" height="1.6"/>
  <rect x="433" y="450.2" width="8" height="1.6"/>
  <rect x="433" y="476.2" width="8" height="1.6"/>
  <rect x="433" y="502.2" width="8" height="1.6"/>
  <rect x="433" y="528.2" width="8" height="1.6"/>
 </g>
 <g fill="#e0e0e0">
  <rect x="409" y="420" width="2.8" height="2.8"/><rect x="414.3" y="420" width="2.8" height="2.8"/>
  <rect x="409" y="425.8" width="2.8" height="2.8"/><rect x="414.3" y="425.8" width="2.8" height="2.8"/>
  <rect x="409" y="431.6" width="2.8" height="2.8"/><rect x="414.3" y="431.6" width="2.8" height="2.8"/>
  <rect x="409" y="446" width="2.8" height="2.8"/><rect x="414.3" y="446" width="2.8" height="2.8"/>
  <rect x="409" y="451.8" width="2.8" height="2.8"/><rect x="414.3" y="451.8" width="2.8" height="2.8"/>
  <rect x="409" y="457.6" width="2.8" height="2.8"/><rect x="414.3" y="457.6" width="2.8" height="2.8"/>
  <rect x="409" y="472" width="2.8" height="2.8"/><rect x="414.3" y="472" width="2.8" height="2.8"/>
  <rect x="409" y="477.8" width="2.8" height="2.8"/><rect x="414.3" y="477.8" width="2.8" height="2.8"/>
  <rect x="409" y="483.6" width="2.8" height="2.8"/><rect x="414.3" y="483.6" width="2.8" height="2.8"/>
 </g>
 <polygon points="456.4,399.5 465.2,399.5 460.8,406.3" fill="#555"/>
 <rect x="472" y="467" width="26" height="26" fill="#f2f2f2"/>
 <polygon points="481,476.5 489,476.5 485,483.8" fill="#5a5a5a"/>
</svg>
<div class="a" style="left:548px;top:356.5px;font-size:13.5px;color:#ececec;line-height:30px">Tree</div>
<div class="a mono" style="left:477px;top:391.5px;color:#8c8c8c;line-height:18px">index/index {4}</div>
<div class="a mono" style="left:501px;top:418px;line-height:18px"><b class="key">myLongitude</b><span class="col">:</span><span class="num">113.3172</span></div>
<div class="a mono" style="left:501px;top:444.5px;line-height:18px"><b class="key">myLatitude</b><span class="col" style="margin-left:3px">:</span><span class="num" style="margin-left:4.5px">23.08331</span></div>
<div class="a mono" style="left:501px;top:471px;line-height:18px"><b class="key">markers</b><span style="color:#8c8c8c"> [0]</span></div>
<div class="a mono" style="left:527px;top:497px;line-height:18px;color:#8c8c8c">(empty array)</div>
<div class="a mono" style="left:501px;top:523px;line-height:18px"><b class="key">__webviewId__</b><span class="col" style="margin-left:4px">:</span><span class="num" style="margin-left:3px">0</span></div>

<svg class="a" style="left:470px;top:450px" width="175" height="72" viewBox="470 450 175 72"><rect x="478.6" y="456.6" width="156.5" height="58.2" rx="2" fill="none" stroke="#f5231c" stroke-width="2.8"/></svg>
</body></html>
